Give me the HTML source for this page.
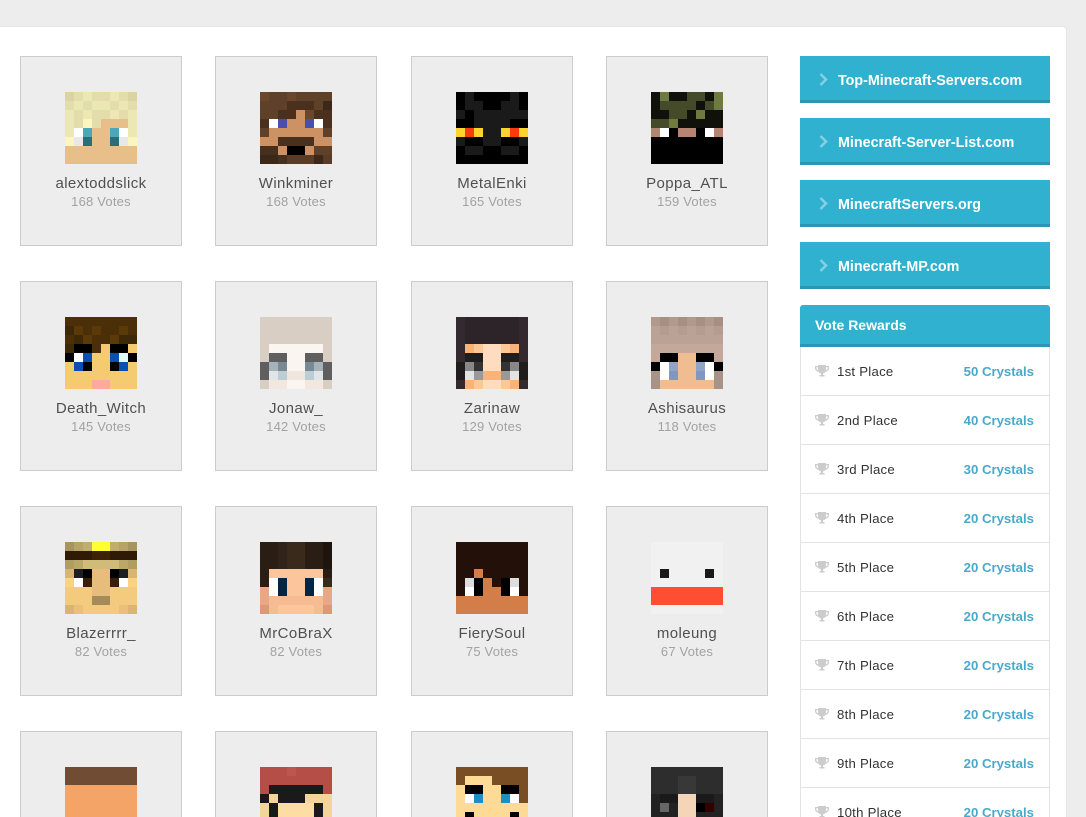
<!DOCTYPE html>
<html><head><meta charset="utf-8"><style>
html,body{margin:0;padding:0;width:1086px;height:817px;overflow:hidden;background:#ededed;font-family:"Liberation Sans",sans-serif}
#w{position:absolute;left:0;top:0;width:1086px;height:817px;overflow:hidden;background:#ededed}
#panel{position:absolute;left:-6px;top:26px;width:1071px;height:790px;background:#fff;border:1px solid #e5e5e5;border-bottom:0;border-radius:4px 4px 0 0}
.c{position:absolute;width:160px;height:188px;background:#ededed;border:1px solid #ccc}
.c.l{height:85px;border-bottom:0;overflow:hidden}
.c svg{position:absolute;left:44px;top:35px;width:72px;height:72px}
.n{position:absolute;left:0;right:0;top:116px;text-align:center;font-size:15px;line-height:20px;letter-spacing:.4px;color:#505050;padding-top:1px}
.v{position:absolute;left:0;right:0;top:136px;text-align:center;font-size:13px;line-height:18px;letter-spacing:.2px;color:#a2a2a2}
.b{position:absolute;left:800px;width:250px;height:44px;background:#2fb1cf;border-bottom:3px solid #2a97ae;color:#fff;font-weight:bold;font-size:14.3px;line-height:51px}
.b span{position:absolute;left:38px;top:0}
.b svg{position:absolute;left:19px;top:17px}
#h{position:absolute;left:800px;top:305px;width:250px;height:39px;background:#2fb1cf;border-bottom:3px solid #2a97ae;border-radius:3px 3px 0 0;color:#fff;font-weight:bold;font-size:14px;line-height:41px}
#h span{position:absolute;left:15px}
.r{position:absolute;left:800px;width:248px;height:48px;border:1px solid #e3e3e3;border-top:0;background:#fff;font-size:13.2px;line-height:50px;color:#333}
.r.l{height:29px;border-bottom:0;overflow:hidden}
.r svg{position:absolute;left:14px;top:18px}
.r b{position:absolute;left:36px;font-weight:normal;letter-spacing:.25px}
.r i{position:absolute;right:15px;font-style:normal;font-weight:bold;color:#4aa9cb}
</style></head><body><div id="w">
<div id="panel"></div>

<div class="c" style="left:20px;top:56px"><svg viewBox="0 0 8 8" shape-rendering="crispEdges"><path fill="#ece8b4" d="M0 0h8v5H0z"/><path fill="#e3ddac" d="M1 0h1v1H1zM3 0h2v1H3zM6 0h1v1H6zM0 1h1v1H0zM2 1h1v1H2zM5 1h1v1H5zM7 1h1v1H7zM1 2h1v2H1zM3 2h2v1H3zM6 2h1v1H6zM3 3h1v1H3z"/><path fill="#d9d4a2" d="M0 0h1v1H0zM7 0h1v1H7z"/><path fill="#fbf6c0" d="M2 3h1v1H2zM0 5h1v1H0zM7 5h1v1H7z"/><path fill="#e9bf89" d="M4 3h3v1H4zM3 4h2v2H3zM0 6h8v2H0z"/><path fill="#fff" d="M1 4h1v1H1zM6 4h1v1H6z"/><path fill="#e8e8e8" d="M1 5h1v1H1zM6 5h1v1H6z"/><path fill="#4aa9b8" d="M2 4h1v1H2zM5 4h1v1H5z"/><path fill="#2c6e78" d="M2 5h1v1H2zM5 5h1v1H5z"/></svg><div class="n">alextoddslick</div><div class="v">168 Votes</div></div>

<div class="c" style="left:215px;top:56px"><svg viewBox="0 0 8 8" shape-rendering="crispEdges"><path fill="#5f4129" d="M0 0h8v3H0zM0 4h1v1H0zM7 4h1v1H7zM6 6h2v1H6z"/><path fill="#6a462c" d="M0 0h1v1H0zM3 0h1v1H3zM5 2h1v1H5z"/><path fill="#4a301d" d="M3 1h3v1H3zM2 2h2v1H2zM6 2h2v1H6zM0 3h1v1H0zM7 3h1v1H7zM2 5h4v1H2z"/><path fill="#3c2818" d="M7 1h1v1H7zM0 7h2v1H0zM6 7h1v1H6z"/><path fill="#46301d" d="M0 6h2v1H0zM2 7h1v1H2z"/><path fill="#5a3c26" d="M3 7h3v1H3zM7 7h1v1H7z"/><path fill="#cd9263" d="M4 2h1v1H4zM3 3h2v1H3zM1 4h6v1H1zM0 5h2v1H0zM6 5h2v1H6zM2 6h1v1H2zM5 6h1v1H5z"/><path fill="#fff" d="M1 3h1v1H1zM6 3h1v1H6z"/><path fill="#4a4fae" d="M2 3h1v1H2zM5 3h1v1H5z"/><path fill="#000" d="M3 6h2v1H3z"/></svg><div class="n">Winkminer</div><div class="v">168 Votes</div></div>

<div class="c" style="left:411px;top:56px"><svg viewBox="0 0 8 8" shape-rendering="crispEdges"><path fill="#000" d="M0 0h8v8H0z"/><path fill="#1a1a1a" d="M1 0h1v1H1zM6 0h1v1H6zM1 1h2v1H1zM5 1h2v1H5zM0 2h1v1H0zM2 2h6v1H2zM2 3h4v1H2zM3 4h2v1H3zM0 5h1v1H0zM3 5h2v1H3zM7 5h1v1H7zM1 6h2v1H1zM5 6h2v1H5z"/><path fill="#fdd32e" d="M0 4h3v1H0zM5 4h3v1H5z"/><path fill="#f93a0e" d="M1 4h1v1H1zM6 4h1v1H6z"/></svg><div class="n">MetalEnki</div><div class="v">165 Votes</div></div>

<div class="c" style="left:606px;top:56px"><svg viewBox="0 0 8 8" shape-rendering="crispEdges"><path fill="#10110a" d="M0 0h8v4H0z"/><path fill="#454a28" d="M4 0h2v1H4zM1 1h4v1H1zM6 1h1v1H6zM2 2h2v1H2zM0 3h2v1H0z"/><path fill="#6f7a40" d="M1 0h1v1H1zM7 0h1v2H7zM5 2h1v1H5zM2 3h1v1H2z"/><path fill="#b58572" d="M0 4h8v1H0z"/><path fill="#fff" d="M1 4h1v1H1zM6 4h1v1H6z"/><path fill="#000" d="M2 4h1v1H2zM5 4h1v1H5zM0 5h8v3H0z"/></svg><div class="n">Poppa_ATL</div><div class="v">159 Votes</div></div>

<div class="c" style="left:20px;top:281px"><svg viewBox="0 0 8 8" shape-rendering="crispEdges"><path fill="#4a2f08" d="M0 0h8v4H0z"/><path fill="#3d2808" d="M0 1h1v1H0zM1 2h1v1H1zM6 2h2v1H6zM0 3h1v1H0z"/><path fill="#5c3a08" d="M1 1h1v1H1zM3 1h1v1H3zM6 1h1v1H6zM2 2h1v1H2zM5 2h1v1H5z"/><path fill="#f5cb72" d="M4 3h1v1H4zM7 3h1v1H7zM3 4h2v2H3zM0 5h1v1H0zM7 5h1v1H7zM0 6h8v2H0z"/><path fill="#000" d="M1 3h2v1H1zM5 3h2v1H5zM0 4h1v1H0zM7 4h1v1H7zM2 5h1v1H2zM5 5h1v1H5z"/><path fill="#fff" d="M1 4h1v1H1z"/><path fill="#e0fbf5" d="M6 4h1v1H6z"/><path fill="#0a50b0" d="M2 4h1v1H2zM5 4h1v1H5zM1 5h1v1H1zM6 5h1v1H6z"/><path fill="#ffa8a0" d="M3 7h2v1H3z"/></svg><div class="n">Death_Witch</div><div class="v">145 Votes</div></div>

<div class="c" style="left:215px;top:281px"><svg viewBox="0 0 8 8" shape-rendering="crispEdges"><path fill="#d9cec3" d="M0 0h8v8H0z"/><path fill="#faf5f1" d="M1 3h6v1H1zM3 4h2v2H3zM3 7h2v1H3z"/><path fill="#5f5f5f" d="M1 4h2v1H1zM5 4h2v1H5zM0 5h1v2H0zM7 5h1v2H7z"/><path fill="#a5b2b8" d="M1 5h1v1H1zM6 5h1v1H6z"/><path fill="#7a8a94" d="M2 5h1v1H2zM5 5h1v1H5z"/><path fill="#e0e5e8" d="M1 6h1v1H1zM6 6h1v1H6z"/><path fill="#bccdd5" d="M2 6h1v1H2zM5 6h1v1H5z"/><path fill="#f1e6de" d="M3 6h2v1H3z"/><path fill="#f3e8e0" d="M1 7h2v1H1zM5 7h2v1H5z"/></svg><div class="n">Jonaw_</div><div class="v">142 Votes</div></div>

<div class="c" style="left:411px;top:281px"><svg viewBox="0 0 8 8" shape-rendering="crispEdges"><path fill="#33292e" d="M0 0h8v8H0z"/><path fill="#2c2429" d="M1 0h6v3H1z"/><path fill="#f8b378" d="M1 3h1v1H1zM6 3h1v1H6zM3 6h2v1H3zM1 7h1v1H1zM6 7h1v1H6z"/><path fill="#fcc898" d="M2 3h1v1H2zM5 3h1v1H5zM2 7h1v1H2zM5 7h1v1H5z"/><path fill="#fddcc0" d="M3 3h2v3H3zM3 7h2v1H3z"/><path fill="#211d1c" d="M1 4h2v1H1zM5 4h2v1H5zM0 5h1v2H0zM7 5h1v2H7z"/><path fill="#888" d="M1 5h1v1H1zM6 5h1v1H6z"/><path fill="#333" d="M2 5h1v1H2zM5 5h1v1H5z"/><path fill="#e3e3e3" d="M1 6h1v1H1zM6 6h1v1H6z"/><path fill="#999" d="M2 6h1v1H2zM5 6h1v1H5z"/></svg><div class="n">Zarinaw</div><div class="v">129 Votes</div></div>

<div class="c" style="left:606px;top:281px"><svg viewBox="0 0 8 8" shape-rendering="crispEdges"><path fill="#bba296" d="M0 0h8v8H0z"/><path fill="#b09a8e" d="M0 0h8v1H0z"/><path fill="#a69084" d="M1 0h1v1H1zM3 0h1v1H3zM5 0h1v1H5zM7 0h1v1H7z"/><path fill="#b49c90" d="M1 1h1v1H1zM3 1h1v1H3zM5 1h1v1H5zM7 1h1v1H7z"/><path fill="#c4a99b" d="M0 3h8v2H0z"/><path fill="#000" d="M1 4h2v1H1zM5 4h2v1H5zM0 5h1v1H0zM7 5h1v1H7z"/><path fill="#f0bc92" d="M3 4h2v3H3zM1 7h6v1H1z"/><path fill="#fff" d="M1 5h1v2H1zM6 5h1v2H6z"/><path fill="#8ea4c8" d="M2 5h1v1H2zM5 5h1v1H5z"/><path fill="#7f98c2" d="M2 6h1v1H2zM5 6h1v1H5z"/><path fill="#a89388" d="M0 6h1v2H0zM7 6h1v2H7z"/></svg><div class="n">Ashisaurus</div><div class="v">118 Votes</div></div>

<div class="c" style="left:20px;top:506px"><svg viewBox="0 0 8 8" shape-rendering="crispEdges"><path fill="#f3ca7e" d="M0 3h8v5H0z"/><path fill="#a8955d" d="M0 0h1v1H0zM7 0h1v1H7z"/><path fill="#b7a365" d="M1 0h1v1H1zM6 0h1v1H6z"/><path fill="#c2ae6c" d="M2 0h1v1H2zM5 0h1v1H5z"/><path fill="#ffff33" d="M3 0h2v1H3z"/><path fill="#2f1a05" d="M0 1h8v1H0z"/><path fill="#3d2205" d="M3 1h2v1H3z"/><path fill="#b09d62" d="M0 2h1v1H0zM7 2h1v1H7z"/><path fill="#bba868" d="M1 2h1v1H1zM6 2h1v1H6z"/><path fill="#d0bc78" d="M2 2h4v1H2z"/><path fill="#d9b574" d="M0 3h1v1H0zM7 3h1v1H7zM0 7h1v1H0zM7 7h1v1H7z"/><path fill="#e6bd7c" d="M3 3h2v2H3zM3 5h2v1H3z"/><path fill="#1e1e1e" d="M1 3h1v1H1zM6 3h1v1H6z"/><path fill="#000" d="M2 3h1v1H2zM5 3h1v1H5z"/><path fill="#fbd27f" d="M0 4h1v1H0zM7 4h1v1H7z"/><path fill="#fff" d="M1 4h1v1H1zM6 4h1v1H6z"/><path fill="#3a1e08" d="M2 4h1v1H2zM5 4h1v1H5z"/><path fill="#a58b5a" d="M3 6h2v1H3z"/><path fill="#e8c07a" d="M1 7h1v1H1zM6 7h1v1H6z"/></svg><div class="n">Blazerrrr_</div><div class="v">82 Votes</div></div>

<div class="c" style="left:215px;top:506px"><svg viewBox="0 0 8 8" shape-rendering="crispEdges"><path fill="#2a1d13" d="M0 0h8v4H0zM0 4h1v1H0z"/><path fill="#32231a" d="M2 0h1v3H2z"/><path fill="#3a2a1c" d="M3 0h2v3H3zM7 4h1v1H7z"/><path fill="#1d150e" d="M7 0h1v3H7z"/><path fill="#fcc59c" d="M1 3h6v3H1z"/><path fill="#fff" d="M1 4h1v2H1zM6 4h1v2H6z"/><path fill="#012543" d="M2 4h1v2H2zM5 4h1v2H5z"/><path fill="#e8a886" d="M0 5h1v2H0zM7 5h1v2H7z"/><path fill="#f5bb93" d="M1 6h6v2H1z"/><path fill="#fcc59c" d="M2 7h4v1H2z"/><path fill="#dd9878" d="M0 7h1v1H0zM7 7h1v1H7z"/></svg><div class="n">MrCoBraX</div><div class="v">82 Votes</div></div>

<div class="c" style="left:411px;top:506px"><svg viewBox="0 0 8 8" shape-rendering="crispEdges"><path fill="#231008" d="M0 0h8v6H0z"/><path fill="#d37d49" d="M2 3h1v1H2zM3 4h1v1H3zM3 5h2v1H3zM0 6h8v2H0z"/><path fill="#ddd" d="M1 4h1v1H1zM6 4h1v1H6z"/><path fill="#fff" d="M1 5h1v1H1zM6 5h1v1H6z"/><path fill="#000" d="M2 4h1v2H2zM5 4h1v2H5z"/></svg><div class="n">FierySoul</div><div class="v">75 Votes</div></div>

<div class="c" style="left:606px;top:506px"><svg viewBox="0 0 8 8" shape-rendering="crispEdges"><path fill="#f1f1f1" d="M0 0h8v8H0z"/><path fill="#191919" d="M1 3h1v1H1zM6 3h1v1H6z"/><path fill="#ff4e31" d="M0 5h8v2H0z"/></svg><div class="n">moleung</div><div class="v">67 Votes</div></div>

<div class="c l" style="left:20px;top:731px"><svg viewBox="0 0 8 8" shape-rendering="crispEdges"><path fill="#f4a466" d="M0 0h8v8H0z"/><path fill="#714c35" d="M0 0h8v2H0z"/></svg></div>

<div class="c l" style="left:215px;top:731px"><svg viewBox="0 0 8 8" shape-rendering="crispEdges"><path fill="#f3d59a" d="M0 3h8v5H0z"/><path fill="#b64e48" d="M0 0h8v3H0z"/><path fill="#bc5650" d="M3 0h1v1H3z"/><path fill="#1a1a1a" d="M1 2h6v1H1zM0 3h1v1H0zM2 3h3v1H2zM1 4h1v2H1zM6 4h1v2H6z"/><path fill="#fddda4" d="M2 4h4v2H2z"/></svg></div>

<div class="c l" style="left:411px;top:731px"><svg viewBox="0 0 8 8" shape-rendering="crispEdges"><path fill="#fddb96" d="M0 0h8v8H0z"/><path fill="#7a4e25" d="M0 0h8v1H0zM0 1h1v1H0zM4 1h4v1H4zM5 2h3v1H5zM7 3h1v1H7z"/><path fill="#000" d="M1 2h2v1H1zM5 2h2v1H5zM1 5h1v1H1zM6 5h1v1H6z"/><path fill="#fff" d="M1 3h1v1H1zM6 3h1v1H6z"/><path fill="#1a8fc0" d="M2 3h1v1H2zM5 3h1v1H5z"/></svg></div>

<div class="c l" style="left:606px;top:731px"><svg viewBox="0 0 8 8" shape-rendering="crispEdges"><path fill="#222" d="M0 0h8v8H0z"/><path fill="#2d2d2d" d="M0 0h8v3H0z"/><path fill="#383838" d="M3 1h2v2H3z"/><path fill="#f5d5b8" d="M3 3h2v3H3z"/><path fill="#1a1a1a" d="M1 3h2v1H1zM5 3h2v1H5z"/><path fill="#666" d="M1 4h1v1H1z"/><path fill="#000" d="M5 4h1v1H5z"/><path fill="#300" d="M6 4h1v1H6z"/></svg></div>

<div class="b" style="top:56px"><svg width="9" height="13" viewBox="0 0 9 13"><path d="M1.500 1l5.500 5.500L1.500 12" fill="none" stroke="#86cfe3" stroke-width="2.600"/></svg><span>Top-Minecraft-Servers.com</span></div>
<div class="b" style="top:118px"><svg width="9" height="13" viewBox="0 0 9 13"><path d="M1.500 1l5.500 5.500L1.500 12" fill="none" stroke="#86cfe3" stroke-width="2.600"/></svg><span>Minecraft-Server-List.com</span></div>
<div class="b" style="top:180px"><svg width="9" height="13" viewBox="0 0 9 13"><path d="M1.500 1l5.500 5.500L1.500 12" fill="none" stroke="#86cfe3" stroke-width="2.600"/></svg><span>MinecraftServers.org</span></div>
<div class="b" style="top:242px"><svg width="9" height="13" viewBox="0 0 9 13"><path d="M1.500 1l5.500 5.500L1.500 12" fill="none" stroke="#86cfe3" stroke-width="2.600"/></svg><span>Minecraft-MP.com</span></div>

<div id="h"><span>Vote Rewards</span></div>

<div class="r" style="top:347px"><svg width="14" height="12" viewBox="0 0 14 12"><path fill="#ccc" fill-rule="evenodd" d="M3 0h8v1h3v2c0 2-1.500 3.500-3.500 3.700C10 7.600 9 8.200 8 8.400V10h1.500v1.500h-5V10H6V8.400C5 8.200 4 7.600 3.500 6.700 1.500 6.500 0 5 0 3V1h3zM1.300 2.200V3c0 1.100.8 2 1.900 2.300C3.100 4.600 3 3.400 3 2.200zM12.700 2.200H11c0 1.200-.1 2.400-.2 3.100 1.100-.3 1.900-1.200 1.900-2.300z"/></svg><b>1st Place</b><i>50 Crystals</i></div>
<div class="r" style="top:396px"><svg width="14" height="12" viewBox="0 0 14 12"><path fill="#ccc" fill-rule="evenodd" d="M3 0h8v1h3v2c0 2-1.500 3.500-3.500 3.700C10 7.600 9 8.200 8 8.400V10h1.500v1.500h-5V10H6V8.400C5 8.200 4 7.600 3.500 6.700 1.500 6.500 0 5 0 3V1h3zM1.300 2.200V3c0 1.100.8 2 1.900 2.300C3.100 4.600 3 3.400 3 2.200zM12.700 2.200H11c0 1.200-.1 2.400-.2 3.100 1.100-.3 1.900-1.200 1.900-2.300z"/></svg><b>2nd Place</b><i>40 Crystals</i></div>
<div class="r" style="top:445px"><svg width="14" height="12" viewBox="0 0 14 12"><path fill="#ccc" fill-rule="evenodd" d="M3 0h8v1h3v2c0 2-1.500 3.500-3.500 3.700C10 7.600 9 8.200 8 8.400V10h1.500v1.500h-5V10H6V8.400C5 8.200 4 7.600 3.500 6.700 1.500 6.500 0 5 0 3V1h3zM1.300 2.200V3c0 1.100.8 2 1.900 2.300C3.100 4.600 3 3.400 3 2.200zM12.700 2.200H11c0 1.200-.1 2.400-.2 3.100 1.100-.3 1.900-1.200 1.900-2.300z"/></svg><b>3rd Place</b><i>30 Crystals</i></div>
<div class="r" style="top:494px"><svg width="14" height="12" viewBox="0 0 14 12"><path fill="#ccc" fill-rule="evenodd" d="M3 0h8v1h3v2c0 2-1.500 3.500-3.500 3.700C10 7.600 9 8.200 8 8.400V10h1.500v1.500h-5V10H6V8.400C5 8.200 4 7.600 3.500 6.700 1.500 6.500 0 5 0 3V1h3zM1.300 2.200V3c0 1.100.8 2 1.900 2.300C3.100 4.600 3 3.400 3 2.200zM12.700 2.200H11c0 1.200-.1 2.400-.2 3.100 1.100-.3 1.900-1.200 1.900-2.300z"/></svg><b>4th Place</b><i>20 Crystals</i></div>
<div class="r" style="top:543px"><svg width="14" height="12" viewBox="0 0 14 12"><path fill="#ccc" fill-rule="evenodd" d="M3 0h8v1h3v2c0 2-1.500 3.500-3.500 3.700C10 7.600 9 8.200 8 8.400V10h1.500v1.500h-5V10H6V8.400C5 8.200 4 7.600 3.500 6.700 1.500 6.500 0 5 0 3V1h3zM1.300 2.200V3c0 1.100.8 2 1.900 2.300C3.100 4.600 3 3.400 3 2.200zM12.700 2.200H11c0 1.200-.1 2.400-.2 3.100 1.100-.3 1.900-1.200 1.900-2.300z"/></svg><b>5th Place</b><i>20 Crystals</i></div>
<div class="r" style="top:592px"><svg width="14" height="12" viewBox="0 0 14 12"><path fill="#ccc" fill-rule="evenodd" d="M3 0h8v1h3v2c0 2-1.500 3.500-3.500 3.700C10 7.600 9 8.200 8 8.400V10h1.500v1.500h-5V10H6V8.400C5 8.200 4 7.600 3.500 6.700 1.500 6.500 0 5 0 3V1h3zM1.300 2.200V3c0 1.100.8 2 1.900 2.300C3.100 4.600 3 3.400 3 2.200zM12.700 2.200H11c0 1.200-.1 2.400-.2 3.100 1.100-.3 1.900-1.200 1.900-2.300z"/></svg><b>6th Place</b><i>20 Crystals</i></div>
<div class="r" style="top:641px"><svg width="14" height="12" viewBox="0 0 14 12"><path fill="#ccc" fill-rule="evenodd" d="M3 0h8v1h3v2c0 2-1.500 3.500-3.500 3.700C10 7.600 9 8.200 8 8.400V10h1.500v1.500h-5V10H6V8.400C5 8.200 4 7.600 3.500 6.700 1.500 6.500 0 5 0 3V1h3zM1.300 2.200V3c0 1.100.8 2 1.900 2.300C3.100 4.600 3 3.400 3 2.200zM12.700 2.200H11c0 1.200-.1 2.400-.2 3.100 1.100-.3 1.900-1.200 1.900-2.300z"/></svg><b>7th Place</b><i>20 Crystals</i></div>
<div class="r" style="top:690px"><svg width="14" height="12" viewBox="0 0 14 12"><path fill="#ccc" fill-rule="evenodd" d="M3 0h8v1h3v2c0 2-1.500 3.500-3.500 3.700C10 7.600 9 8.200 8 8.400V10h1.500v1.500h-5V10H6V8.400C5 8.200 4 7.600 3.500 6.700 1.500 6.500 0 5 0 3V1h3zM1.300 2.200V3c0 1.100.8 2 1.900 2.300C3.100 4.600 3 3.400 3 2.200zM12.700 2.200H11c0 1.200-.1 2.400-.2 3.100 1.100-.3 1.900-1.200 1.900-2.300z"/></svg><b>8th Place</b><i>20 Crystals</i></div>
<div class="r" style="top:739px"><svg width="14" height="12" viewBox="0 0 14 12"><path fill="#ccc" fill-rule="evenodd" d="M3 0h8v1h3v2c0 2-1.500 3.500-3.500 3.700C10 7.600 9 8.200 8 8.400V10h1.500v1.500h-5V10H6V8.400C5 8.200 4 7.600 3.500 6.700 1.500 6.500 0 5 0 3V1h3zM1.300 2.200V3c0 1.100.8 2 1.900 2.300C3.100 4.600 3 3.400 3 2.200zM12.700 2.200H11c0 1.200-.1 2.400-.2 3.100 1.100-.3 1.900-1.200 1.900-2.300z"/></svg><b>9th Place</b><i>20 Crystals</i></div>
<div class="r l" style="top:788px"><svg width="14" height="12" viewBox="0 0 14 12"><path fill="#ccc" fill-rule="evenodd" d="M3 0h8v1h3v2c0 2-1.500 3.500-3.500 3.700C10 7.600 9 8.200 8 8.400V10h1.500v1.500h-5V10H6V8.400C5 8.200 4 7.600 3.500 6.700 1.500 6.500 0 5 0 3V1h3zM1.300 2.200V3c0 1.100.8 2 1.900 2.300C3.100 4.600 3 3.400 3 2.200zM12.700 2.200H11c0 1.200-.1 2.400-.2 3.100 1.100-.3 1.900-1.200 1.900-2.300z"/></svg><b>10th Place</b><i>20 Crystals</i></div>
</div></body></html>
